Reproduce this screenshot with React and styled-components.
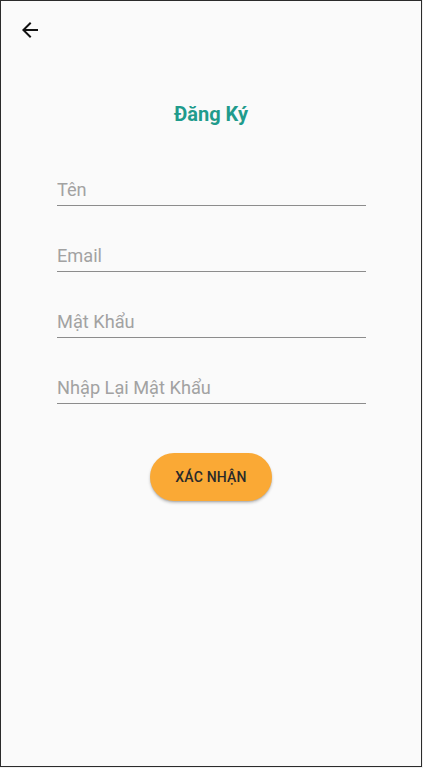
import React from "react";
import styled, { createGlobalStyle } from "styled-components";

const Global = createGlobalStyle`
  html, body { margin: 0; padding: 0; background: #f0f0f0; }
  body { font-family: Roboto, "Noto Sans", sans-serif; }
  * { box-sizing: border-box; }
`;

const Frame = styled.div`
  width: 422px;
  height: 767px;
  border: 1px solid #2b2b2b;
  background: #fafafa;
  display: flex;
  flex-direction: column;
`;

const TopBar = styled.div`
  height: 58px;
  display: flex;
  align-items: center;
  padding-left: 17px;
`;

const BackButton = styled.button`
  border: none;
  background: transparent;
  padding: 0;
  width: 24px;
  height: 24px;
  display: flex;
  align-items: center;
  justify-content: center;
  cursor: pointer;
`;

const Title = styled.h1`
  margin: 42px 0 0 0;
  text-align: center;
  font-family: Roboto, sans-serif;
  font-weight: 700;
  font-size: 20px;
  line-height: 26px;
  color: #1f9b8c;
`;

const Form = styled.div`
  display: flex;
  flex-direction: column;
  gap: 29px;
  padding: 42px 55px 0 56px;
`;

const Field = styled.input`
  width: 100%;
  height: 37px;
  border: none;
  border-bottom: 1.3px solid #8c8c8c;
  background: transparent;
  font-family: Roboto, sans-serif;
  font-size: 18.2px;
  font-weight: 400;
  color: #333;
  padding: 7px 0 3px 0;
  outline: none;
  &::placeholder { color: #a2a2a2; }
`;

const ButtonRow = styled.div`
  display: flex;
  justify-content: center;
  padding-top: 49px;
`;

const Confirm = styled.button`
  width: 122px;
  height: 48px;
  border: none;
  border-radius: 24px;
  background: #faa935;
  color: #2a2a2a;
  font-family: Roboto, sans-serif;
  font-weight: 500;
  font-size: 14px;
  letter-spacing: 0.2px;
  box-shadow: 0 2px 3px rgba(0,0,0,0.22), 0 1px 1px rgba(0,0,0,0.1);
  cursor: pointer;
`;

export default function App() {
  return (
    <>
      <Global />
      <Frame>
        <TopBar>
          <BackButton aria-label="back">
            <svg width="24" height="24" viewBox="0 0 24 24">
              <path d="M20 11H7.83l5.59-5.59L12 4l-8 8 8 8 1.41-1.41L7.83 13H20v-2z" fill="#111" />
            </svg>
          </BackButton>
        </TopBar>
        <Title>Đăng Ký</Title>
        <Form>
          <Field placeholder="Tên" />
          <Field placeholder="Email" />
          <Field placeholder="Mật Khẩu" type="password" />
          <Field placeholder="Nhập Lại Mật Khẩu" type="password" />
        </Form>
        <ButtonRow>
          <Confirm>XÁC NHẬN</Confirm>
        </ButtonRow>
      </Frame>
    </>
  );
}
